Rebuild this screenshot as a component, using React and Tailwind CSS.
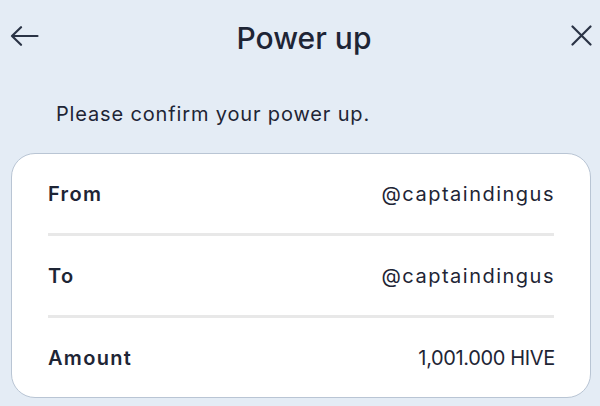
export default function App() {
  const rows = [
    ["From", "@captaindingus", "tracking-[1.5px]"],
    ["To", "@captaindingus", "tracking-[1.5px]"],
    ["Amount", "1,001.000 HIVE", "tracking-[-0.35px]"],
  ];
  return (
    <div
      className="w-[600px] h-[406px] bg-[#e4ecf5] text-[#1e2535] overflow-hidden"
      style={{ fontFamily: "Inter, 'Noto Sans', sans-serif" }}
    >
      <div className="relative h-[78px] flex items-center justify-center">
        <svg className="absolute left-[10px] top-[26px]" width="29" height="20" viewBox="0 0 29 20" fill="none" stroke="#2a3345" strokeWidth="2.2" strokeLinecap="round" strokeLinejoin="round">
          <path d="M27.5 10H2M11 1.2L2 10l9 8.8" />
        </svg>
        <span className="text-[30px] font-medium ml-[8px] mt-[-2px]">Power up</span>
        <svg className="absolute left-[571px] top-[25px]" width="21" height="21" viewBox="0 0 21 21" fill="none" stroke="#2a3345" strokeWidth="2.2" strokeLinecap="round">
          <path d="M1.5 1.5l18 18M19.5 1.5l-18 18" />
        </svg>
      </div>
      <div className="pl-[56px] h-[75px] pb-[4px] flex items-center text-[20px] tracking-[0.85px]">
        Please confirm your power up.
      </div>
      <div className="ml-[11px] mr-[9px] bg-white border border-[#b9c5d4] rounded-[24px] px-[36px]">
        {rows.map(([k, v, tr], i) => (
          <div key={k}>
            <div className="h-[79px] flex items-center justify-between text-[20px]">
              <span className="font-semibold tracking-[1.3px]">{k}</span>
              <span className={tr + " mr-[-1px]"}>{v}</span>
            </div>
            {i < rows.length - 1 && <div className="h-[3px] bg-[#e8e8e8]" />}
          </div>
        ))}
      </div>
    </div>
  );
}
